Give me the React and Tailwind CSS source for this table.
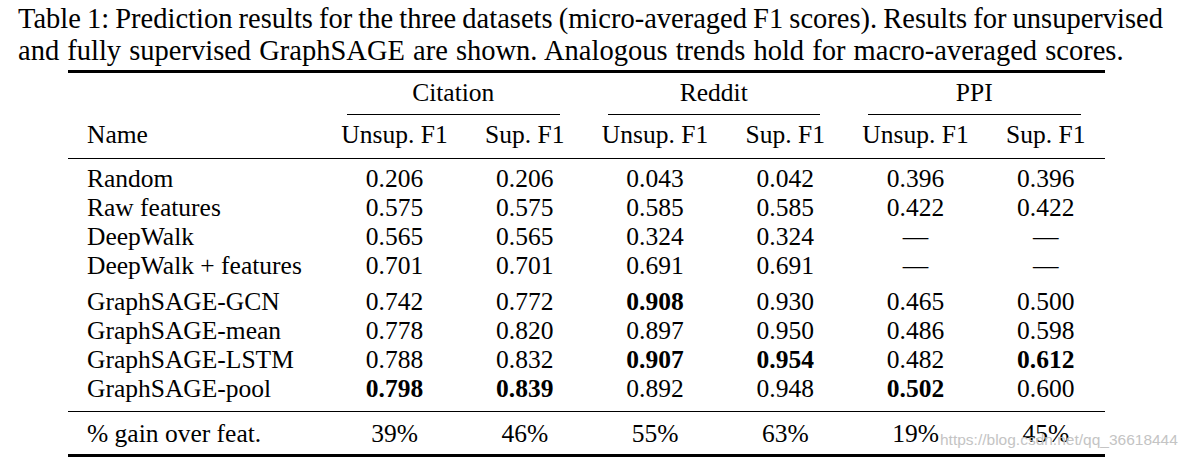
import React from "react";

const cols = "grid grid-cols-[255px_143px_117.5px_143px_117.5px_143px_117.5px]";

const groups = ["Citation", "Reddit", "PPI"];

const baseRows = [
  ["Random", "0.206", "0.206", "0.043", "0.042", "0.396", "0.396"],
  ["Raw features", "0.575", "0.575", "0.585", "0.585", "0.422", "0.422"],
  ["DeepWalk", "0.565", "0.565", "0.324", "0.324", "—", "—"],
  ["DeepWalk + features", "0.701", "0.701", "0.691", "0.691", "—", "—"],
];

// bold cells are marked with a leading "*"
const sageRows = [
  ["GraphSAGE-GCN", "0.742", "0.772", "*0.908", "0.930", "0.465", "0.500"],
  ["GraphSAGE-mean", "0.778", "0.820", "0.897", "0.950", "0.486", "0.598"],
  ["GraphSAGE-LSTM", "0.788", "0.832", "*0.907", "*0.954", "0.482", "*0.612"],
  ["GraphSAGE-pool", "*0.798", "*0.839", "0.892", "0.948", "*0.502", "0.600"],
];

function Row({ cells }) {
  return (
    <div className={`${cols} leading-[29px]`}>
      <div className="pl-[19px] whitespace-nowrap">{cells[0]}</div>
      {cells.slice(1).map((c, i) => {
        const bold = c.startsWith("*");
        return (
          <div key={i} className={`text-center ${bold ? "font-bold" : ""}`}>
            {bold ? c.slice(1) : c}
          </div>
        );
      })}
    </div>
  );
}

export default function App() {
  return (
    <div className="relative w-[1185px] h-[461px] overflow-hidden bg-white text-black font-['Liberation_Serif',serif]">
      <div className="pt-[3px] pl-[18px] text-[28.5px] leading-[32px]">
        <div className="w-[1145px] whitespace-nowrap text-justify [text-align-last:justify] [word-spacing:-2px]">
          Table 1: Prediction results for the three datasets (micro-averaged F1 scores). Results for unsupervised
        </div>
        <div className="whitespace-nowrap [word-spacing:1px]">
          and fully supervised GraphSAGE are shown. Analogous trends hold for macro-averaged scores.
        </div>
      </div>

      <div className="ml-[68px] mt-[3px] w-[1037px] text-[25.5px]">
        <div className="h-[3px] bg-black" />

        <div className={`${cols} pt-[5px] leading-[29px]`}>
          <div />
          {groups.map((g) => (
            <div key={g} className="col-span-2 flex flex-col">
              <div className="text-center">{g}</div>
              <div className="mx-[24px] mt-[7px] h-px bg-black" />
            </div>
          ))}
        </div>

        <div className={`${cols} mt-[5px] leading-[29px]`}>
          <div className="pl-[19px]">Name</div>
          {groups.map((g) => (
            <React.Fragment key={g}>
              <div className="text-center">Unsup. F1</div>
              <div className="text-center">Sup. F1</div>
            </React.Fragment>
          ))}
        </div>

        <div className="mt-[9px] h-px bg-black" />

        <div className="mt-[5px]">
          {baseRows.map((r) => (
            <Row key={r[0]} cells={r} />
          ))}
        </div>

        <div className="mt-[7px]">
          {sageRows.map((r) => (
            <Row key={r[0]} cells={r} />
          ))}
        </div>

        <div className="mt-[8px] h-px bg-black" />

        <div className="mt-[7px]">
          <Row cells={["% gain over feat.", "39%", "46%", "55%", "63%", "19%", "45%"]} />
        </div>

        <div className="mt-[6px] h-[3px] bg-black" />
      </div>

      <div className="absolute left-[940px] top-[431px] text-[15.5px] leading-[18px] text-[#c4c4c4] font-['Liberation_Sans',sans-serif] whitespace-nowrap">
        https://blog.csdn.net/qq_36618444
      </div>
    </div>
  );
}
